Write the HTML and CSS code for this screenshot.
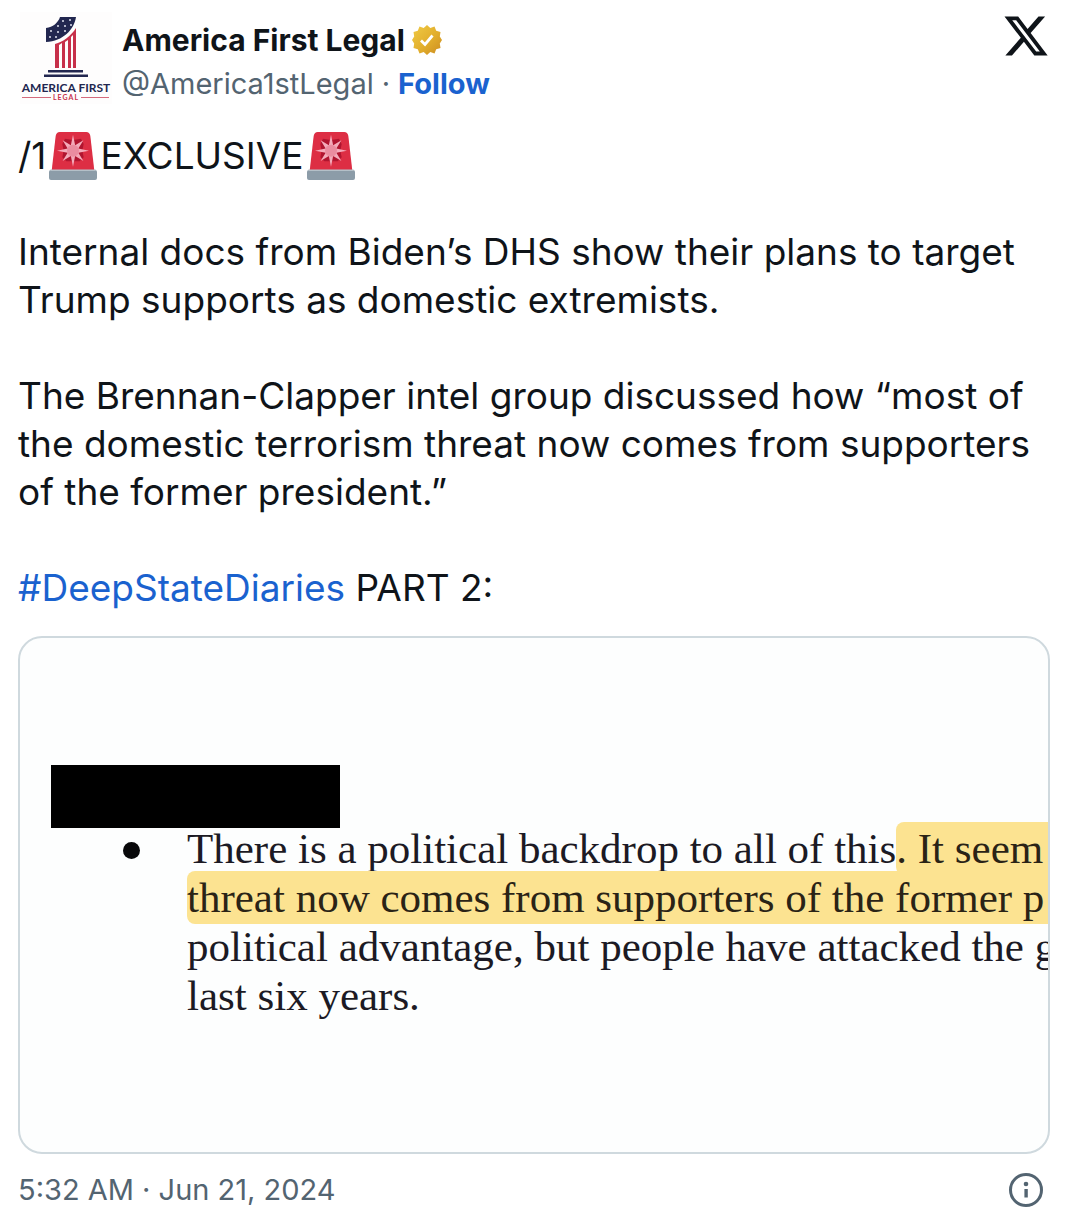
FILE: index.html
```html
<!DOCTYPE html>
<html lang="en">
<head>
<meta charset="utf-8">
<meta name="viewport" content="width=device-width, initial-scale=1">
<title>America First Legal on X</title>
<link rel="stylesheet" href="styles.css">
</head>
<body>
<svg class="defs" aria-hidden="true">
  <symbol id="siren" viewBox="0 0 36 36">
    <path fill="#DD2E44" d="M34 29H2L5 3c.3-2 1.500-3 3-3h20c1.500 0 2.700 1 3 3z"/>
    <path fill="#B0152F" d="M18 6l6-1 2 4-1 5 1 5-3 3-5 0-5 0-3-3 1-5-1-5 2-4z"/>
    <path fill="#F4ABBA" d="M18 2l1.600 8L25.800 6.200 22 12.400l8 1.600-8 1.600 3.800 6.200-6.200-3.800L18 26l-1.600-8-6.200 3.800 3.800-6.200L6 14l8-1.600-3.800-6.200 6.200 3.800z"/>
    <circle cx="18" cy="14" r="4.500" fill="#EA8DA0"/>
    <rect y="28.500" width="36" height="7.500" rx="1.500" fill="#8C9CA8"/>
    <path d="M1 28.700h34" stroke="#B4C0C8" stroke-width="1"/>
  </symbol>
</svg>
<article class="tweet">
  <header class="head">
    <a class="avatar" href="#" aria-label="America First Legal profile">
      <svg viewBox="0 0 92 92" width="92" height="92">
        <rect width="92" height="92" fill="#fefdfd"/>
        <path fill="#222750" d="M26 16c7-1 12-5 14-11h16c-2 13-13 24-30 25z"/>
        <path fill="#c7304a" d="M35 32c8-2 16-8 21-16v40h-3V23l-2 2v31h-3V28l-3 2v26h-3V31l-3 2v23h-4z"/>
        <path fill="#222750" d="M28 58h35v2.500H28zM24 62.500h44V65H24z"/>
        <g fill="#dfe2ee"><circle cx="43" cy="9" r="1"/><circle cx="50" cy="8" r="1"/><circle cx="38" cy="14" r="1"/><circle cx="45" cy="14" r="1"/><circle cx="51" cy="13" r="1"/><circle cx="31" cy="19" r="1"/><circle cx="38" cy="20" r="1"/><circle cx="45" cy="19" r="1"/><circle cx="30" cy="25" r="1"/><circle cx="36" cy="25" r="1"/></g>
        <text class="logo-name" x="46" y="80" text-anchor="middle">AMERICA FIRST</text>
        <text class="logo-sub" x="46" y="88" text-anchor="middle">LEGAL</text>
        <path stroke="#d46a7c" d="M2 85.500h29M61 85.500h28"/>
      </svg>
    </a>
    <div class="who">
      <div class="row title">
        <a class="name" href="#">America First Legal</a>
        <svg class="badge" viewBox="0 0 30 30" role="img" aria-label="Verified">
          <defs><linearGradient id="gold" x1="0" y1="0" x2="1" y2="1"><stop offset="0" stop-color="#f0cb45"/><stop offset=".55" stop-color="#e2ae2c"/><stop offset="1" stop-color="#cb8b20"/></linearGradient></defs>
          <path fill="url(#gold)" d="M15 0l3.300 3 4.200-1.500 1.700 4.200 4.300 1.300-.7 4.500L30 15l-2.200 3.500.7 4.500-4.300 1.300-1.700 4.200-4.200-1.500L15 30l-3.300-3-4.200 1.500-1.700-4.200L1.500 23l.7-4.500L0 15l2.200-3.500L1.500 7l4.300-1.300L7.500 1.500 11.700 3z"/>
          <path fill="none" stroke="#fff" stroke-width="2.800" d="M9 15.500l4 4 7.500-9"/>
        </svg>
      </div>
      <div class="row handle"><a class="user" href="#">@America1stLegal</a><span class="dot">·</span><a class="follow" href="#">Follow</a></div>
    </div>
    <a class="x" href="#" aria-label="View on X">
      <svg viewBox="0 0 24 24" width="48" height="48"><path fill="#0f1419" d="M18.244 2.250h3.308l-7.227 8.260 8.502 11.240H16.170l-5.214-6.817L4.990 21.750H1.680l7.730-8.835L1.254 2.250H8.080l4.713 6.231zm-1.161 17.520h1.833L7.084 4.126H5.117z"/></svg>
    </a>
  </header>

  <div class="body">
    <p class="lead">/1<svg class="siren" role="img" aria-label="siren"><use href="#siren"/></svg>EXCLUSIVE<svg class="siren" role="img" aria-label="siren"><use href="#siren"/></svg></p>
    <p>Internal docs from Biden’s DHS show their plans to target<br>Trump supports as domestic extremists.</p>
    <p>The Brennan-Clapper intel group discussed how “most of<br>the domestic terrorism threat now comes from supporters<br>of the former president.”</p>
    <p><a class="tag" href="#">#DeepStateDiaries</a> PART 2:</p>
  </div>

  <figure class="media">
    <div class="redacted"></div>
    <ul class="doc">
      <li>There is a political backdrop to all of this<mark>. It seem</mark><br><mark>threat now comes from supporters of the former p</mark><br>political advantage, but people have attacked the g<br>last six years.</li>
    </ul>
  </figure>

  <footer class="foot">
    <a class="time" href="#">5:32 AM · Jun 21, 2024</a>
    <a class="info" href="#" aria-label="Ads info and privacy">
      <svg viewBox="0 0 36 36" width="36" height="36"><circle cx="18" cy="18" r="15.500" fill="none" stroke="#536471" stroke-width="3"/><circle cx="18" cy="12" r="2.300" fill="#536471"/><path fill="#536471" d="M16.400 17h3.400v8.500h-3.400z"/></svg>
    </a>
  </footer>
</article>
</body>
</html>
```
FILE: styles.css
```css
* { box-sizing: border-box; }
body {
  margin: 0;
  background: #fff;
  color: #0f1419;
  font-family: Inter, "Liberation Sans", sans-serif;
}
a { color: inherit; text-decoration: none; }
p, figure, ul { margin: 0; padding: 0; }
.defs { display: none; }
.tweet { padding: 12px 26px 0 18px; }

.head { display: flex; align-items: flex-start; }
.avatar, .x, .info { display: block; flex: none; }
.avatar svg, .x svg, .info svg { display: block; }
.avatar { margin: 0 10px 0 2px; }
.logo-name { font: 700 12px Lato, sans-serif; fill: #222750; }
.logo-sub { font: 700 7px Lato, sans-serif; letter-spacing: 1px; fill: #c7304a; }
.who { flex: 1; padding-top: 6px; }
.row { display: flex; align-items: center; height: 44px; line-height: 44px; font-size: 29px; }
.title { font-size: 30px; }
.name { font-weight: 700; }
.badge { width: 30px; height: 30px; margin-left: 7px; }
.handle { color: #536471; }
.dot { margin: 0 8px; }
.follow { color: #1a62cf; font-weight: 700; }

.body { margin-top: 26px; font-size: 37px; line-height: 48px; }
.body p + p { margin-top: 48px; }
.lead { display: flex; }
.siren { width: 48px; height: 48px; margin: 0 3px; }
.tag { color: #1a62cf; }

.media {
  height: 518px;
  margin-top: 24px;
  padding: 127px 0 0 31px;
  overflow: hidden;
  border: 2px solid #cfd9de;
  border-radius: 24px;
  background: #fdfefe;
}
.redacted { width: 289px; height: 63px; background: #000; }
.doc {
  margin-top: -4px;
  list-style: none;
  color: #1c1a24;
  font: 43px/49px "Liberation Serif", serif;
  white-space: nowrap;
}
.doc li { position: relative; padding-left: 136px; }
.doc li::before {
  content: "";
  position: absolute;
  left: 72px;
  top: 18px;
  width: 17px;
  height: 17px;
  border-radius: 50%;
  background: #08080a;
}
mark { padding: 3px 16px 3px 0; border-radius: 8px; background: #fce391; color: #2a2316; }

.foot {
  display: flex;
  justify-content: space-between;
  align-items: center;
  margin-top: 16px;
  padding-right: 6px;
  color: #536471;
  font-size: 29px;
  line-height: 40px;
}
```
